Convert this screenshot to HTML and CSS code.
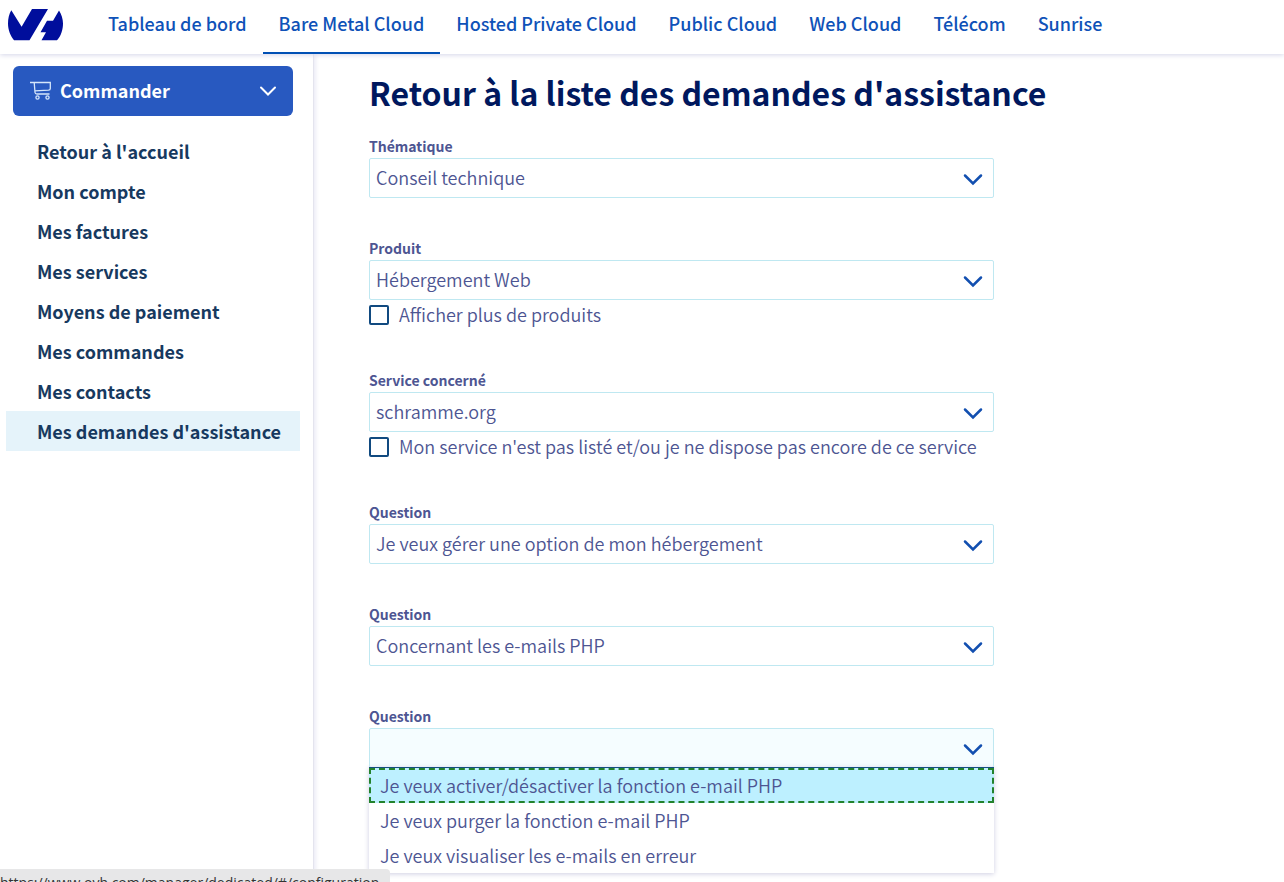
FILE: index.html
```html
<!DOCTYPE html>
<html lang="fr">
<head>
<meta charset="utf-8">
<meta name="viewport" content="width=device-width, initial-scale=1">
<title>Demandes d'assistance</title>
<link rel="stylesheet" href="styles.css">
</head>
<body>
<header class="topbar">
  <a class="logo" href="#" aria-label="OVHcloud">
    <svg width="56" height="34" viewBox="0 0 56 34"><path fill="#000e9c" d="M3.300 2.300C1 6 0 11 0 15.500C0 22 2.500 28 6 32.300H21.500L40 1H24L13.600 18.800ZM51 2.500L45 12.800H39L32.500 24.300H38L33.500 32.300H49C53 28 55 21.500 55 15.500C55 11 53.500 6.500 51 2.500Z"/></svg>
  </a>
  <nav class="tabs">
    <a class="tab" href="#">Tableau de bord</a>
    <a class="tab tab-active" href="#" aria-current="page">Bare Metal Cloud</a>
    <a class="tab" href="#">Hosted Private Cloud</a>
    <a class="tab" href="#">Public Cloud</a>
    <a class="tab" href="#">Web Cloud</a>
    <a class="tab" href="#">Télécom</a>
    <a class="tab" href="#">Sunrise</a>
  </nav>
</header>
<div class="layout">
  <aside class="sidebar">
    <button class="order" type="button">
      <svg width="22" height="20" viewBox="0 0 22 20" fill="none" stroke="#d5e6fa" stroke-width="1.300"><path d="M0 2.500H20.300V8.500Q20.300 10 18.500 10.200L5 10.800M4.200 2.500L5 12.500Q5.200 14 7 14H19.500"/><circle cx="7.500" cy="17.500" r="1.600"/><circle cx="17.500" cy="17.500" r="1.600"/></svg>
      <span class="order-label">Commander</span>
      <svg width="18" height="12" viewBox="0 0 18 12" fill="none" stroke="#fff" stroke-width="2" stroke-linecap="round"><path d="M2 3.500L9 10.500L16 3.500"/></svg>
    </button>
    <nav class="menu">
      <a class="menu-item" href="#">Retour à l'accueil</a>
      <a class="menu-item" href="#">Mon compte</a>
      <a class="menu-item" href="#">Mes factures</a>
      <a class="menu-item" href="#">Mes services</a>
      <a class="menu-item" href="#">Moyens de paiement</a>
      <a class="menu-item" href="#">Mes commandes</a>
      <a class="menu-item" href="#">Mes contacts</a>
      <a class="menu-item menu-item-active" href="#" aria-current="page">Mes demandes d'assistance</a>
    </nav>
  </aside>
  <main class="content">
    <h1 class="title">Retour à la liste des demandes d'assistance</h1>
    <form class="form">
      <div class="field">
        <label class="label" for="theme">Thématique</label>
        <div class="control">
          <select class="select" id="theme"><option>Conseil technique</option></select>
          <svg class="chevron" width="20" height="14" viewBox="0 0 20 14"><path d="M2 3.500L10 11.500L18 3.500"/></svg>
        </div>
      </div>
      <div class="field">
        <label class="label" for="product">Produit</label>
        <div class="control">
          <select class="select" id="product"><option>Hébergement Web</option></select>
          <svg class="chevron" width="20" height="14" viewBox="0 0 20 14"><path d="M2 3.500L10 11.500L18 3.500"/></svg>
        </div>
        <label class="check"><input class="box" type="checkbox"><span class="check-text">Afficher plus de produits</span></label>
      </div>
      <div class="field">
        <label class="label" for="service">Service concerné</label>
        <div class="control">
          <select class="select" id="service"><option>schramme.org</option></select>
          <svg class="chevron" width="20" height="14" viewBox="0 0 20 14"><path d="M2 3.500L10 11.500L18 3.500"/></svg>
        </div>
        <label class="check"><input class="box" type="checkbox"><span class="check-text">Mon service n'est pas listé et/ou je ne dispose pas encore de ce service</span></label>
      </div>
      <div class="field">
        <label class="label" for="q1">Question</label>
        <div class="control">
          <select class="select" id="q1"><option>Je veux gérer une option de mon hébergement</option></select>
          <svg class="chevron" width="20" height="14" viewBox="0 0 20 14"><path d="M2 3.500L10 11.500L18 3.500"/></svg>
        </div>
      </div>
      <div class="field">
        <label class="label" for="q2">Question</label>
        <div class="control">
          <select class="select" id="q2"><option>Concernant les e-mails PHP</option></select>
          <svg class="chevron" width="20" height="14" viewBox="0 0 20 14"><path d="M2 3.500L10 11.500L18 3.500"/></svg>
        </div>
      </div>
      <div class="field">
        <label class="label" for="q3">Question</label>
        <div class="control">
          <select class="select select-open" id="q3"><option></option></select>
          <svg class="chevron" width="20" height="14" viewBox="0 0 20 14"><path d="M2 3.500L10 11.500L18 3.500"/></svg>
          <ul class="options" role="listbox" aria-label="Question">
            <li class="option option-active" role="option" aria-selected="true">Je veux activer/désactiver la fonction e-mail PHP</li>
            <li class="option" role="option">Je veux purger la fonction e-mail PHP</li>
            <li class="option" role="option">Je veux visualiser les e-mails en erreur</li>
          </ul>
        </div>
      </div>
    </form>
  </main>
</div>
<div class="status">https://www.ovh.com/manager/dedicated/#/configuration</div>
</body>
</html>
```
FILE: styles.css
```css
* { box-sizing: border-box; }
body {
  margin: 0;
  min-height: 100vh;
  display: flex;
  flex-direction: column;
  background: #fff;
  color: #4d5592;
  font-family: "Noto Sans CJK SC", "Noto Sans", sans-serif;
  font-size: 18px;
  font-weight: 350;
  line-height: 24px;
}
a { text-decoration: none; }
.topbar {
  display: flex;
  align-items: stretch;
  height: 54px;
  padding-left: 8px;
  background: #fff;
  box-shadow: 0 1px 5px #d4d5e8;
  position: relative;
  z-index: 1;
}
.logo { display: flex; padding-top: 8px; width: 84px; }
.tabs { display: flex; white-space: nowrap; }
.tab {
  padding: 11px 16px 0;
  color: #0f52b8;
  font-weight: 500;
}
.tab-active { border-bottom: 2px solid #0050b4; }
.layout { display: flex; flex: 1; }
.sidebar {
  flex: none;
  width: 314px;
  padding: 12px 13px 0 6px;
  border-right: 1px solid #e4e4ee;
  box-shadow: 2px 0 4px #ececf6;
}
.order {
  display: flex;
  align-items: center;
  gap: 8px;
  width: 280px;
  height: 50px;
  margin: 0 0 15px 7px;
  padding: 0 16px 2px 17px;
  border: 0;
  border-radius: 6px;
  background: #2859c0;
  color: #fff;
  font: inherit;
  font-weight: 700;
}
.order-label { flex: 1; text-align: left; }
.menu { display: flex; flex-direction: column; }
.menu-item {
  padding: 8px 16px 8px 31px;
  color: #17395f;
  font-weight: 700;
  white-space: nowrap;
}
.menu-item-active { background: #e5f3fa; }
.content { flex: 1; min-width: 0; padding: 14px 55px 0; }
.title {
  margin: 0 0 20px;
  color: #00185e;
  font-size: 32px;
  font-weight: 700;
  line-height: 48px;
}
.form { display: flex; flex-direction: column; gap: 40px; max-width: 625px; }
.label { display: block; height: 22px; font-size: 14px; line-height: 20px; font-weight: 700; }
.control { position: relative; }
.select {
  display: block;
  width: 100%;
  height: 40px;
  padding: 0 40px 2px 6px;
  appearance: none;
  border: 1px solid #bfe8f1;
  border-radius: 2px;
  background: #fff;
  color: #4d5592;
  font: inherit;
  line-height: 36px;
}
.select-open { background: #f5fdff; }
.chevron {
  position: absolute;
  right: 11px;
  top: 14px;
  fill: none;
  stroke: #124fb0;
  stroke-width: 2.5;
  stroke-linecap: round;
  pointer-events: none;
}
.check { display: flex; align-items: center; gap: 10px; height: 30px; white-space: nowrap; }
.check-text { padding-bottom: 2px; }
.box {
  flex: none;
  width: 20px;
  height: 20px;
  margin: 0;
  appearance: none;
  border: 2px solid #114a80;
  border-radius: 2px;
  background: #fff;
}
.options {
  position: absolute;
  left: 0;
  right: 0;
  top: 39px;
  margin: 0;
  padding: 0;
  list-style: none;
  background: #fff;
  border-top: 1px solid #164f80;
  box-shadow: 0 1px 5px #cfcfe2;
}
.option { height: 35px; padding: 0 11px; line-height: 35px; }
.option-active {
  padding: 0 9px;
  border: 2px dashed #23822c;
  background: #bdf0ff;
  line-height: 31px;
}
.status {
  position: fixed;
  left: 0;
  bottom: 0;
  z-index: 2;
  height: 13px;
  padding: 4px 11px 0 0;
  overflow: hidden;
  border-radius: 0 4px 0 0;
  background: #e7e7e8;
  color: #333;
  font-family: "Open Sans", sans-serif;
  font-size: 14px;
  font-weight: 400;
  line-height: 20px;
}
```
